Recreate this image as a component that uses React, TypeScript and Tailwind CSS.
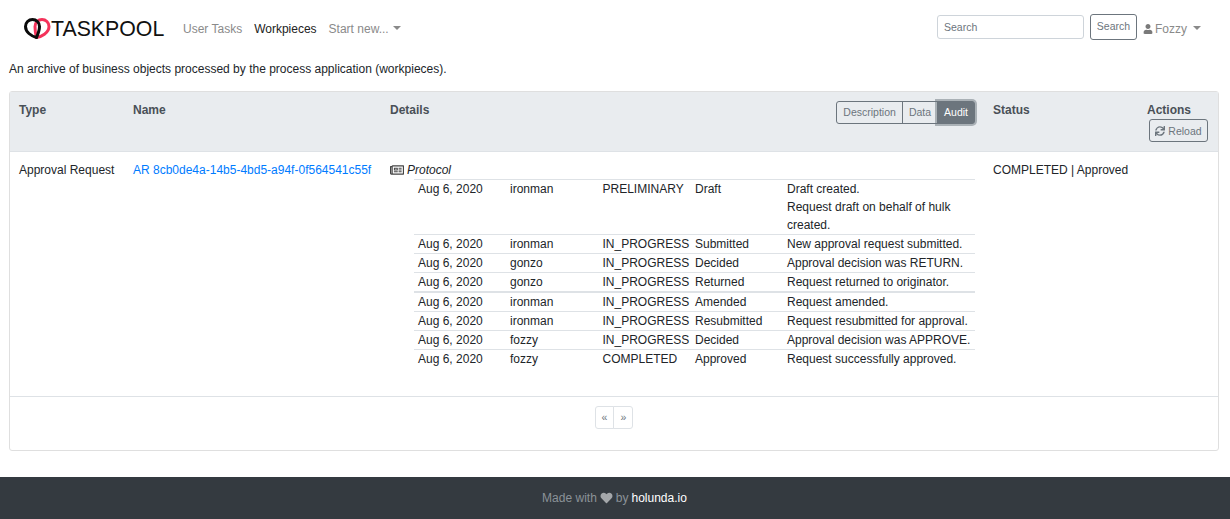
import { FaHeart, FaRegNewspaper, FaSync, FaUser } from "react-icons/fa"

const rows = [
  ["ironman", "PRELIMINARY", "Draft", ["Draft created.", "Request draft on behalf of hulk created."]],
  ["ironman", "IN_PROGRESS", "Submitted", ["New approval request submitted."]],
  ["gonzo", "IN_PROGRESS", "Decided", ["Approval decision was RETURN."]],
  ["gonzo", "IN_PROGRESS", "Returned", ["Request returned to originator."]],
  ["ironman", "IN_PROGRESS", "Amended", ["Request amended."]],
  ["ironman", "IN_PROGRESS", "Resubmitted", ["Request resubmitted for approval."]],
  ["fozzy", "IN_PROGRESS", "Decided", ["Approval decision was APPROVE."]],
  ["fozzy", "COMPLETED", "Approved", ["Request successfully approved."]],
] as const

function Logo() {
  return (
    <svg width="27" height="21" viewBox="0 0 27 21" fill="none" className="shrink-0">
      <path d="M12.500 19.500C17 19 25 15 25 8.500A7 7 0 0 0 11 8.500C11 12 11.500 16 12.500 19.500z" stroke="#f4325a" strokeWidth="3" />
      <path d="M12.500 19.500C7 18 1.500 14 1.500 8.500A7 7 0 0 1 15.500 8.500C15.500 12 14 16 12.500 19.500z" stroke="#0a0a0a" strokeWidth="3" />
    </svg>
  )
}

export default function App() {
  return (
    <div className="min-h-[519px] bg-white text-[12px] leading-[18px] text-[#212529] font-['Liberation_Sans',Arial,sans-serif]">
      <nav className="flex h-[55px] items-center pl-6 pr-[29px]">
        <div className="mt-[2px] flex w-[139px] items-center">
          <Logo />
          <span className="text-[21.3px] leading-[30px] text-[#111]">TASKPOOL</span>
        </div>
        <div className="ml-[20px] mt-[2px] flex items-center gap-3 text-[#8a8a8a]">
          <a>User Tasks</a>
          <a className="text-[#222]">Workpieces</a>
          <a className="flex items-center">
            Start new...
            <span className="mb-px ml-1 border-x-[4px] border-t-[4px] border-x-transparent border-t-[#8a8a8a]" />
          </a>
        </div>
        <div className="ml-auto -mt-[1px] flex items-center">
          <input
            placeholder="Search"
            className="h-6 w-[147px] rounded-[3px] border border-[#ced4da] px-[6px] text-[10.5px] outline-none placeholder:text-[#6c757d]"
          />
          <button className="ml-[6px] h-[26px] w-[47px] rounded-[3px] border border-[#6c757d] pb-[3px] text-[10.5px] text-[#6c757d]">
            Search
          </button>
          <div className="ml-[6px] mt-[3px] flex items-center text-[#8a8a8a]">
            <FaUser className="mr-[2px] h-[10px] w-[10px] text-[#7a7a7a]" />
            Fozzy
            <span className="mb-px ml-[6px] border-x-[4px] border-t-[4px] border-x-transparent border-t-[#8a8a8a]" />
          </div>
        </div>
      </nav>

      <p className="pl-[9px] pt-[5px]">An archive of business objects processed by the process application (workpieces).</p>

      <div className="ml-[9px] mr-[11px] mt-[13px] h-[360px] rounded-[3px] border border-[#dfdfdf]">
        <div className="grid h-[60px] grid-cols-[114px_257px_603px_154px_1fr] border-b border-b-[#dee2e6] bg-[#e9ecef] pl-[9px] pt-[9px] font-bold text-[#495057]">
          <div>Type</div>
          <div>Name</div>
          <div className="flex items-start justify-between pr-[18px]">
            <span>Details</span>
            <div className="flex h-[23px] text-[10.5px] font-normal leading-[21px] text-[#6c757d]">
              <span className="rounded-l-[3px] border border-[#6c757d] px-[6px]">Description</span>
              <span className="-ml-px border border-[#6c757d] px-[6px]">Data</span>
              <span className="-ml-px rounded-r-[3px] border border-[#6c757d] bg-[#6c757d] px-[6px] text-white shadow-[0_0_0_2px_rgba(108,117,125,0.5)]">
                Audit
              </span>
            </div>
          </div>
          <div>Status</div>
          <div>
            Actions
            <button className="ml-[2px] flex h-[23px] w-[59px] items-center justify-center rounded-[3px] border border-[#6c757d] text-[10.5px] font-normal text-[#6c757d]">
              <FaSync className="mr-[3px] h-[10px] w-[10px]" />
              Reload
            </button>
          </div>
        </div>

        <div className="grid h-[244px] grid-cols-[114px_257px_603px_154px_1fr] pl-[9px] pt-[9px]">
          <div>Approval Request</div>
          <a className="text-[#007bff]">AR 8cb0de4a-14b5-4bd5-a94f-0f564541c55f</a>
          <div className="pr-[18px]">
            <div className="flex h-[18px] items-center italic">
              <FaRegNewspaper className="mr-[3px] h-[14px] w-[14px] text-[#444]" />
              Protocol
            </div>
            <div className="ml-6 border-t border-[#dee2e6]">
              {rows.map(([user, state, action, notes], i) => (
                <div
                  key={i}
                  className={`grid grid-cols-[92px_92.500px_92.500px_92px_1fr] px-1 ${i > 0 ? "border-t border-[#dee2e6]" : ""} ${i === 4 ? "border-t-2" : ""}`}
                >
                  <div>Aug 6, 2020</div>
                  <div>{user}</div>
                  <div>{state}</div>
                  <div>{action}</div>
                  <div>
                    {notes.map((n) => (
                      <div key={n}>{n}</div>
                    ))}
                  </div>
                </div>
              ))}
            </div>
          </div>
          <div>COMPLETED | Approved</div>
          <div />
        </div>

        <div className="flex justify-center border-t border-[#dee2e6] pt-[9px]">
          <div className="flex h-[23px] text-[10.5px] leading-[21px] text-[#6c757d]">
            <span className="w-[19px] rounded-l-[3px] border border-[#dee2e6] text-center">«</span>
            <span className="-ml-px w-[20px] rounded-r-[3px] border border-[#dee2e6] pl-px text-center">»</span>
          </div>
        </div>
      </div>

      <footer className="mt-[26px] flex h-[42px] items-center justify-center bg-[#343a40] pr-px text-[#8b9298]">
        Made with
        <FaHeart className="mx-[3px] h-3 w-[13px] text-[#a4a7aa]" />
        by <span className="ml-[3px] text-white">holunda.io</span>
      </footer>
    </div>
  )
}
